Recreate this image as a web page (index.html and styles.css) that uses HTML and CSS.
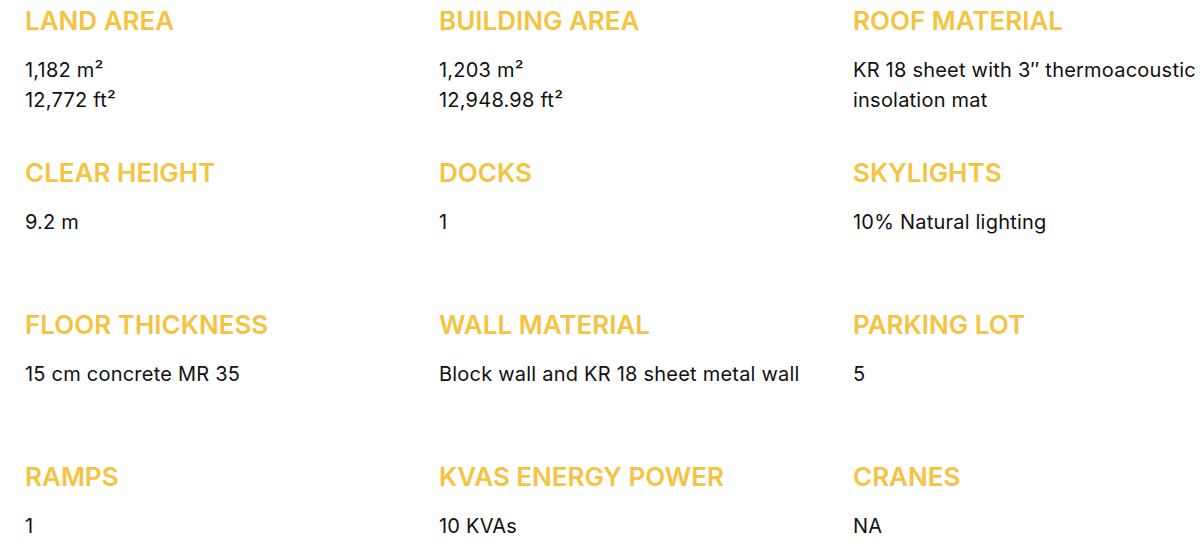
FILE: index.html
```html
<!DOCTYPE html>
<html lang="en">
<head>
<meta charset="utf-8">
<title>Specifications</title>
<link rel="stylesheet" href="styles.css">
</head>
<body>
<section class="specs">
  <div class="spec">
    <h3 class="spec-title">LAND AREA</h3>
    <p class="spec-value">1,182 m²<br>12,772 ft²</p>
  </div>
  <div class="spec">
    <h3 class="spec-title">BUILDING AREA</h3>
    <p class="spec-value">1,203 m²<br>12,948.98 ft²</p>
  </div>
  <div class="spec">
    <h3 class="spec-title">ROOF MATERIAL</h3>
    <p class="spec-value">KR 18 sheet with 3″ thermoacoustic insolation mat</p>
  </div>
  <div class="spec">
    <h3 class="spec-title">CLEAR HEIGHT</h3>
    <p class="spec-value">9.2 m</p>
  </div>
  <div class="spec">
    <h3 class="spec-title">DOCKS</h3>
    <p class="spec-value">1</p>
  </div>
  <div class="spec">
    <h3 class="spec-title">SKYLIGHTS</h3>
    <p class="spec-value">10% Natural lighting</p>
  </div>
  <div class="spec">
    <h3 class="spec-title">FLOOR THICKNESS</h3>
    <p class="spec-value">15 cm concrete MR 35</p>
  </div>
  <div class="spec">
    <h3 class="spec-title">WALL MATERIAL</h3>
    <p class="spec-value">Block wall and KR 18 sheet metal wall</p>
  </div>
  <div class="spec">
    <h3 class="spec-title">PARKING LOT</h3>
    <p class="spec-value">5</p>
  </div>
  <div class="spec">
    <h3 class="spec-title">RAMPS</h3>
    <p class="spec-value">1</p>
  </div>
  <div class="spec">
    <h3 class="spec-title">KVAS ENERGY POWER</h3>
    <p class="spec-value">10 KVAs</p>
  </div>
  <div class="spec">
    <h3 class="spec-title">CRANES</h3>
    <p class="spec-value">NA</p>
  </div>
</section>
</body>
</html>
```

FILE: styles.css
```css
html {
  overflow: hidden;
}

body {
  margin: 0;
  background: #ffffff;
  font-family: Inter, "Noto Sans", sans-serif;
  color: #111111;
}

.specs {
  display: grid;
  grid-template-columns: repeat(3, 384px);
  grid-auto-rows: 152px;
  column-gap: 30px;
  padding: 5px 0 0 25px;
}

.spec {
  display: flex;
  flex-direction: column;
}

.spec-title {
  margin: 0;
  font-size: 26px;
  line-height: 31px;
  font-weight: 600;
  color: #f5c342;
}

.spec-value {
  margin: 19px 0 0;
  font-size: 20px;
  line-height: 30px;
  font-weight: 400;
  letter-spacing: 0.22px;
}
```
